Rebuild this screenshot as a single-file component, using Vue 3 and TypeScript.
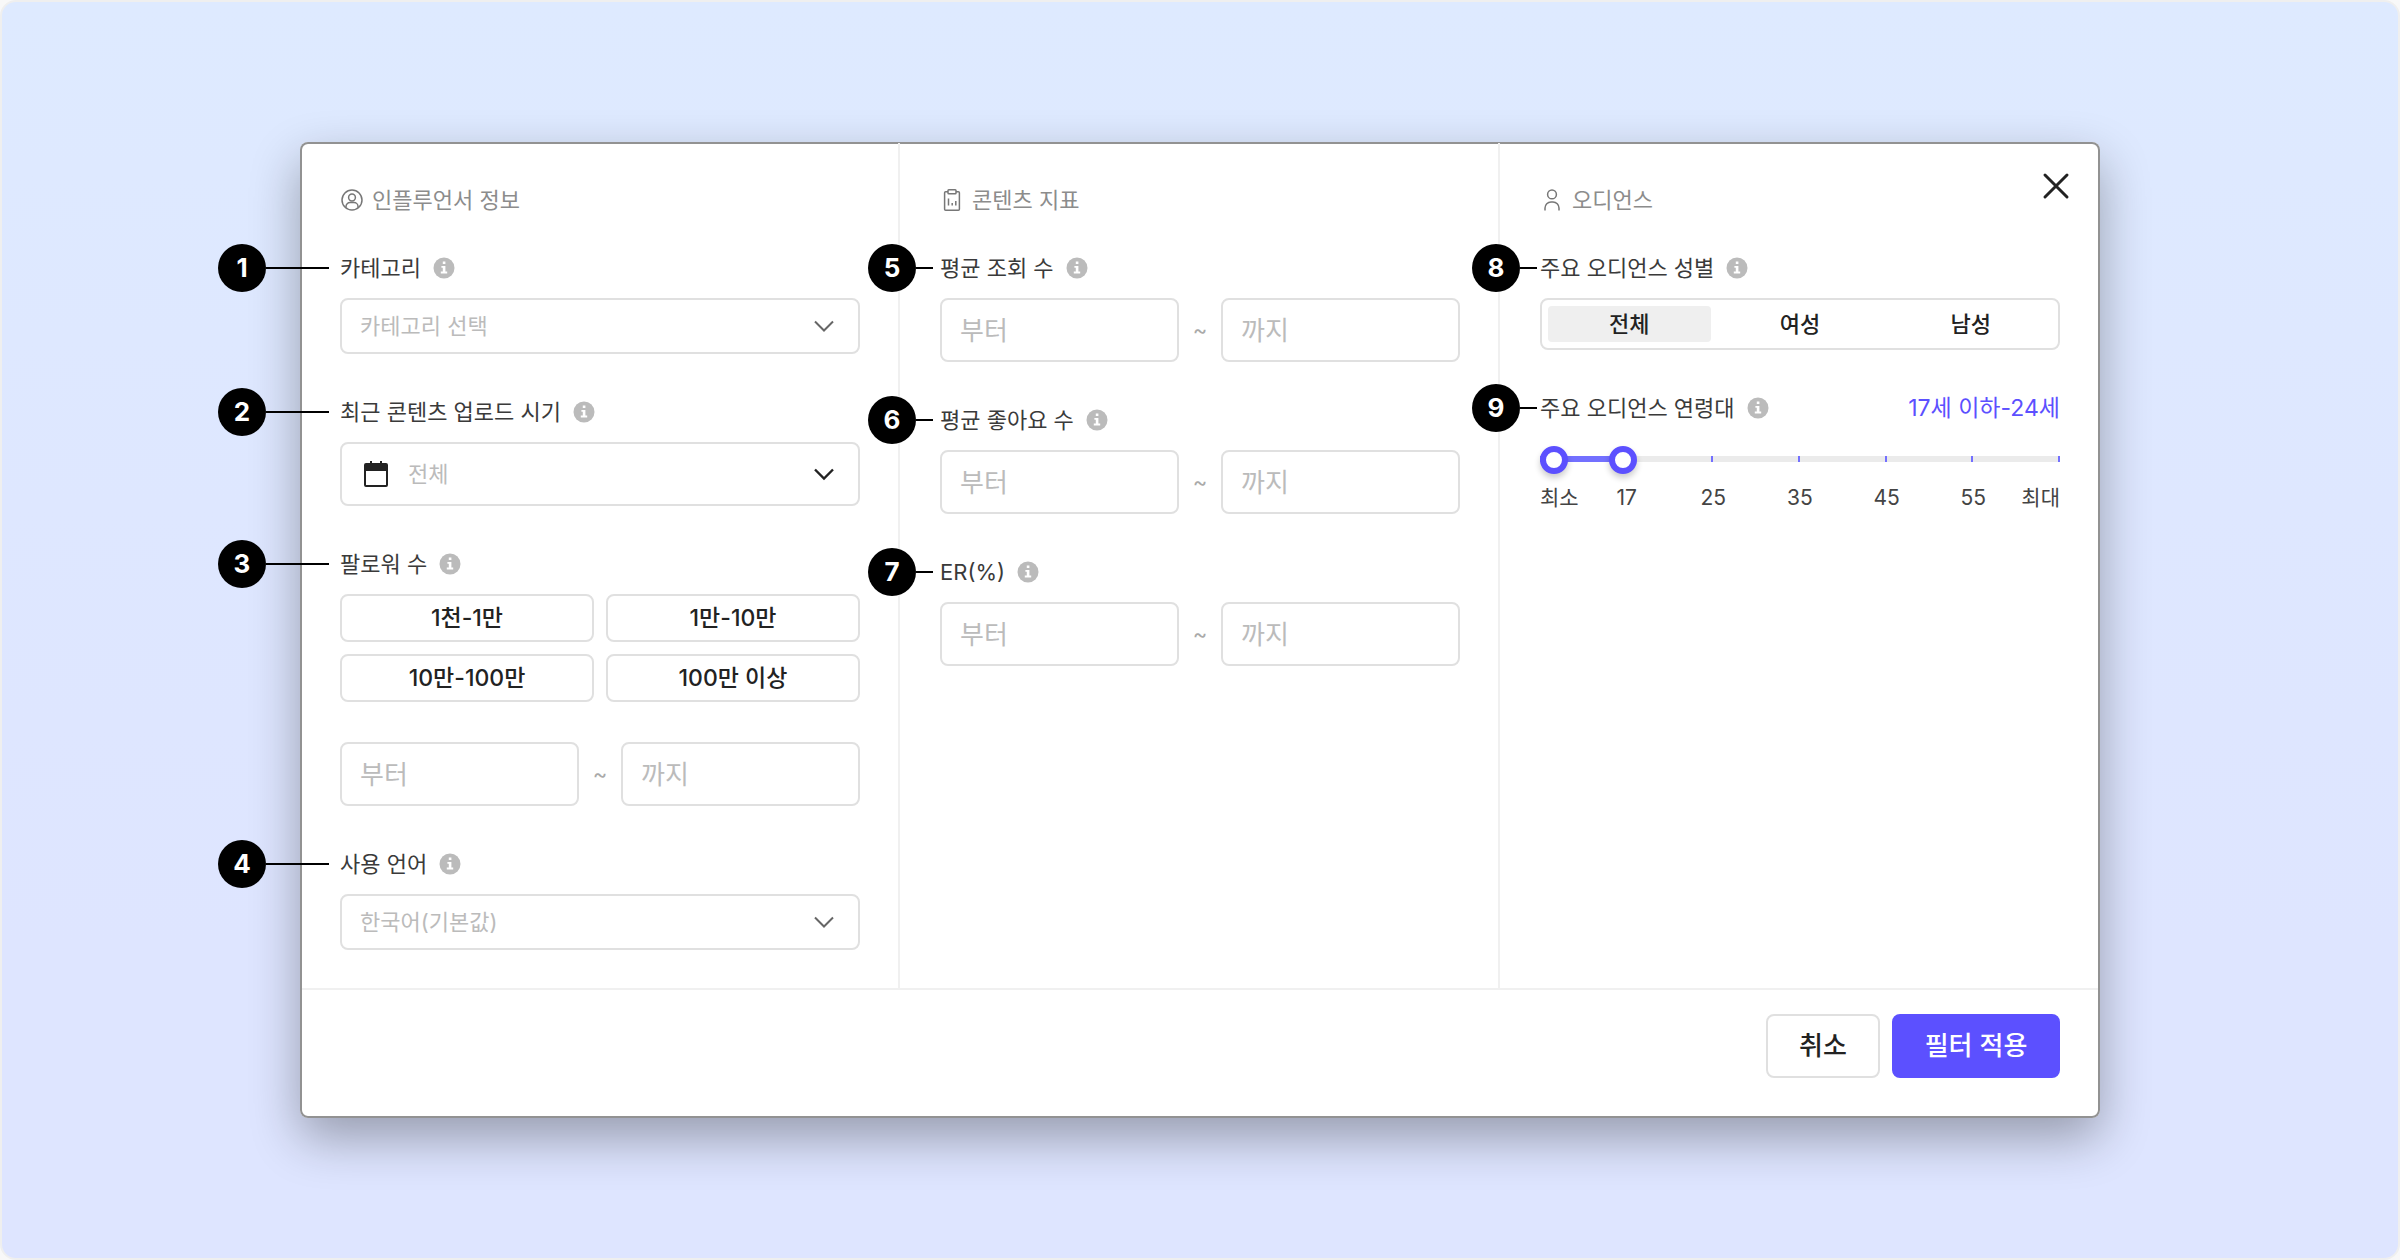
<script setup lang="ts">
import { ref } from 'vue'

interface RangeField {
  id: string
  step: number
  label: string
}

const followerPresets: string[] = ['1천-1만', '1만-10만', '10만-100만', '100만 이상']

const metricFields: RangeField[] = [
  { id: 'views', step: 5, label: '평균 조회 수' },
  { id: 'likes', step: 6, label: '평균 좋아요 수' },
  { id: 'er', step: 7, label: 'ER(%)' },
]

const genders: string[] = ['전체', '여성', '남성']
const gender = ref('전체')

const ageLabels: string[] = ['17', '25', '35', '45', '55']
const ageTicks: number[] = [2, 3, 4, 5, 6]
const ageMin = ref(0)
const ageMax = ref(14)
</script>

<template>
  <main class="stage">
    <form class="dialog" @submit.prevent>
      <button type="button" class="close" aria-label="닫기">
        <svg viewBox="0 0 28 28" width="28" height="28"><path d="M3 3L25 25M25 3L3 25" /></svg>
      </button>

      <div class="columns">
        <section class="column">
          <h2>
            <svg class="line-icon" viewBox="0 0 24 24">
              <circle cx="12" cy="12" r="10" />
              <circle cx="12" cy="9.5" r="3.4" />
              <path d="M6 19.5v-1a4 4 0 0 1 4-4h4a4 4 0 0 1 4 4v1" />
            </svg>
            인플루언서 정보
          </h2>

          <div class="field">
            <div class="label-row">
              <span class="step wide"><b>1</b></span>
              <label for="category">카테고리</label>
              <svg class="info" viewBox="0 0 22 22"><circle cx="11" cy="11" r="10.5" /><path d="M9.8 4.6h2.6v2.5H9.8zM8.4 9h4v5.6h1.8v1.8H7.8v-1.8h2V10.7H8.4z" /></svg>
            </div>
            <div class="select">
              <select id="category"><option>카테고리 선택</option></select>
              <svg class="chevron" viewBox="0 0 24 24"><path d="M3 7.5l9 9 9-9" /></svg>
            </div>
          </div>

          <div class="field">
            <div class="label-row">
              <span class="step wide"><b>2</b></span>
              <label for="uploaded">최근 콘텐츠 업로드 시기</label>
              <svg class="info" viewBox="0 0 22 22"><circle cx="11" cy="11" r="10.5" /><path d="M9.8 4.6h2.6v2.5H9.8zM8.4 9h4v5.6h1.8v1.8H7.8v-1.8h2V10.7H8.4z" /></svg>
            </div>
            <div class="select tall">
              <select id="uploaded"><option>전체</option></select>
              <svg class="calendar" viewBox="0 0 24 26">
                <path class="solid" d="M0 4a2 2 0 0 1 2-2h4V0h2v2h8V0h2v2h4a2 2 0 0 1 2 2v6H0z" />
                <path class="frame" d="M1 9v15a1 1 0 0 0 1 1h20a1 1 0 0 0 1-1V9" />
              </svg>
              <svg class="chevron dark" viewBox="0 0 24 24"><path d="M3 7.5l9 9 9-9" /></svg>
            </div>
          </div>

          <div class="field">
            <div class="label-row">
              <span class="step wide"><b>3</b></span>
              <label for="followers-from">팔로워 수</label>
              <svg class="info" viewBox="0 0 22 22"><circle cx="11" cy="11" r="10.5" /><path d="M9.8 4.6h2.6v2.5H9.8zM8.4 9h4v5.6h1.8v1.8H7.8v-1.8h2V10.7H8.4z" /></svg>
            </div>
            <div class="presets">
              <button v-for="preset in followerPresets" :key="preset" type="button">{{ preset }}</button>
            </div>
            <div class="range">
              <input id="followers-from" type="text" placeholder="부터" />
              <span class="tilde">~</span>
              <input type="text" placeholder="까지" aria-label="팔로워 수 까지" />
            </div>
          </div>

          <div class="field">
            <div class="label-row">
              <span class="step wide"><b>4</b></span>
              <label for="language">사용 언어</label>
              <svg class="info" viewBox="0 0 22 22"><circle cx="11" cy="11" r="10.5" /><path d="M9.8 4.6h2.6v2.5H9.8zM8.4 9h4v5.6h1.8v1.8H7.8v-1.8h2V10.7H8.4z" /></svg>
            </div>
            <div class="select">
              <select id="language"><option>한국어(기본값)</option></select>
              <svg class="chevron" viewBox="0 0 24 24"><path d="M3 7.5l9 9 9-9" /></svg>
            </div>
          </div>
        </section>

        <section class="column">
          <h2>
            <svg class="line-icon" viewBox="0 0 24 24">
              <path d="M8 3.8H5.6a1 1 0 0 0-1 1v16.4a1 1 0 0 0 1 1h12.8a1 1 0 0 0 1-1V4.8a1 1 0 0 0-1-1H16" />
              <rect x="8" y="1.8" width="8" height="4" rx="0.8" />
              <path d="M8.5 10.5v7M12.2 15v2.5M15.8 13v4.5" />
            </svg>
            콘텐츠 지표
          </h2>

          <div v-for="field in metricFields" :key="field.id" class="field">
            <div class="label-row">
              <span class="step"><b>{{ field.step }}</b></span>
              <label :for="field.id">{{ field.label }}</label>
              <svg class="info" viewBox="0 0 22 22"><circle cx="11" cy="11" r="10.5" /><path d="M9.8 4.6h2.6v2.5H9.8zM8.4 9h4v5.6h1.8v1.8H7.8v-1.8h2V10.7H8.4z" /></svg>
            </div>
            <div class="range">
              <input :id="field.id" type="text" placeholder="부터" />
              <span class="tilde">~</span>
              <input type="text" placeholder="까지" :aria-label="field.label + ' 까지'" />
            </div>
          </div>
        </section>

        <section class="column">
          <h2>
            <svg class="line-icon" viewBox="0 0 24 24">
              <circle cx="12" cy="6.4" r="4.4" />
              <path d="M5 22.5V20a6 6 0 0 1 6-6h2a6 6 0 0 1 6 6v2.5" />
            </svg>
            오디언스
          </h2>

          <div class="field">
            <div class="label-row">
              <span class="step near"><b>8</b></span>
              <span id="gender-label">주요 오디언스 성별</span>
              <svg class="info" viewBox="0 0 22 22"><circle cx="11" cy="11" r="10.5" /><path d="M9.8 4.6h2.6v2.5H9.8zM8.4 9h4v5.6h1.8v1.8H7.8v-1.8h2V10.7H8.4z" /></svg>
            </div>
            <div class="segments" role="group" aria-labelledby="gender-label">
              <button
                v-for="option in genders"
                :key="option"
                type="button"
                :class="{ active: option === gender }"
                :aria-pressed="option === gender"
                @click="gender = option"
              >{{ option }}</button>
            </div>
          </div>

          <div class="field">
            <div class="label-row">
              <span class="step near"><b>9</b></span>
              <label for="age-min">주요 오디언스 연령대</label>
              <svg class="info" viewBox="0 0 22 22"><circle cx="11" cy="11" r="10.5" /><path d="M9.8 4.6h2.6v2.5H9.8zM8.4 9h4v5.6h1.8v1.8H7.8v-1.8h2V10.7H8.4z" /></svg>
              <output class="age-value" for="age-min age-max">17세 이하-24세</output>
            </div>
            <div class="slider">
              <div class="track">
                <div class="fill" :style="{ left: ageMin + '%', width: ageMax - ageMin + '%' }"></div>
                <i v-for="tick in ageTicks" :key="tick" :style="{ left: (tick / 6) * 100 + '%' }"></i>
              </div>
              <input id="age-min" v-model.number="ageMin" type="range" min="0" max="100" />
              <input id="age-max" v-model.number="ageMax" type="range" min="0" max="100" aria-label="최대 연령" />
            </div>
            <div class="age-labels">
              <span class="first">최소</span>
              <span v-for="age in ageLabels" :key="age">{{ age }}</span>
              <span class="last">최대</span>
            </div>
          </div>
        </section>
      </div>

      <footer>
        <button type="button" class="cancel">취소</button>
        <button type="submit" class="apply">필터 적용</button>
      </footer>
    </form>
  </main>
</template>

<style>
body {
  background: #f8f8f8;
}
</style>

<style scoped>
* {
  box-sizing: border-box;
}
.stage {
  display: flex;
  align-items: center;
  justify-content: center;
  min-height: 100vh;
  border: 2px solid #efefef;
  border-radius: 16px;
  background: linear-gradient(#deeaff, #dee7ff 40%, #dee5ff 75%, #dee5ff);
  color: #444;
  font: 22px/36px Inter, "Noto Sans CJK KR", sans-serif;
}
.dialog {
  position: relative;
  width: 75vw;
  border-radius: 8px;
  background: #fff;
  box-shadow: inset 0 0 0 2px #929292, 0 20px 50px rgba(0, 0, 0, 0.32);
}
button,
input,
select {
  margin: 0;
  font: inherit;
}
button {
  padding: 0;
  border: 2px solid #e0e0e0;
  border-radius: 8px;
  background: #fff;
  color: #222;
  font-weight: 500;
}
.close {
  position: absolute;
  top: 30px;
  right: 30px;
  display: flex;
  border: 0;
  background: none;
}
.close path {
  fill: none;
  stroke: #222;
  stroke-width: 3;
  stroke-linecap: round;
}
.columns {
  display: grid;
  grid-template-columns: repeat(3, minmax(0, 1fr));
}
.column {
  display: flex;
  flex-direction: column;
  gap: 40px;
  padding: 40px 40px 38px;
}
.column:not(:last-child) {
  padding-right: 38px;
  border-right: 2px solid #f0f0f0;
  border-image: linear-gradient(#929292 2px, #f0f0f0 2px) 1;
}
h2 {
  display: flex;
  align-items: center;
  gap: 8px;
  margin: 0 0 -8px;
  color: #8c8c8c;
  font-size: 22px;
  font-weight: 400;
}
.line-icon {
  width: 24px;
  height: 24px;
  fill: none;
  stroke: #777;
  stroke-width: 1.5;
}
.label-row {
  position: relative;
  display: flex;
  align-items: center;
  gap: 12px;
  margin-bottom: 12px;
  color: #3a3a3a;
}
.info {
  width: 22px;
  height: 22px;
  fill: #bbb;
}
.info path {
  fill: #fff;
}
.step {
  position: absolute;
  left: -72px;
  display: flex;
  align-items: center;
}
.step::after {
  width: 17px;
  height: 2px;
  background: #000;
  content: "";
}
.step.wide {
  left: -122px;
}
.step.wide::after {
  width: 63px;
}
.step.near {
  left: -68px;
}
.step b {
  width: 48px;
  border-radius: 50%;
  background: #000;
  color: #fff;
  font-size: 26px;
  font-weight: 700;
  line-height: 48px;
  text-align: center;
}
.select {
  position: relative;
  display: flex;
  align-items: center;
  height: 56px;
}
.select.tall {
  height: 64px;
}
select {
  width: 100%;
  height: 100%;
  padding: 0 60px 0 18px;
  border: 2px solid #e0e0e0;
  border-radius: 8px;
  background: #fff;
  color: #bbb;
  appearance: none;
}
.tall select {
  padding-left: 66px;
}
.chevron {
  position: absolute;
  right: 24px;
  width: 24px;
  height: 24px;
  fill: none;
  stroke: #666;
  stroke-width: 2;
  pointer-events: none;
}
.chevron.dark {
  stroke: #222;
  stroke-width: 2.4;
}
.calendar {
  position: absolute;
  left: 24px;
  width: 24px;
  height: 26px;
  pointer-events: none;
}
.calendar .solid {
  fill: #222;
}
.calendar .frame {
  fill: none;
  stroke: #222;
  stroke-width: 2;
}
.presets {
  display: grid;
  grid-template-columns: 1fr 1fr;
  gap: 12px;
  margin-bottom: 40px;
}
.presets button {
  height: 48px;
  font-size: 23px;
}
.range {
  display: flex;
  align-items: center;
}
.range input {
  flex: 1;
  width: 0;
  height: 64px;
  padding: 0 18px;
  border: 2px solid #e0e0e0;
  border-radius: 8px;
  background: #fff;
  color: #222;
  font-size: 26px;
}
.range input::placeholder {
  color: #bbb;
  opacity: 1;
}
.tilde {
  width: 42px;
  color: #aaa;
  text-align: center;
}
.segments {
  display: grid;
  grid-template-columns: repeat(3, 1fr);
  gap: 8px;
  padding: 6px;
  border: 2px solid #e0e0e0;
  border-radius: 8px;
}
.segments button {
  height: 36px;
  border: 0;
  border-radius: 4px;
}
.segments .active {
  background: #efefef;
}
.age-value {
  margin-left: auto;
  color: #5c50ff;
  font-size: 23px;
}
.slider {
  position: relative;
  height: 28px;
  margin: 20px 0 6px;
}
.track {
  position: absolute;
  top: 10px;
  right: 0;
  left: 0;
  height: 6px;
  background: #ebebeb;
}
.fill {
  position: absolute;
  height: 6px;
  background: #7370ff;
}
.track i {
  position: absolute;
  width: 2px;
  height: 6px;
  margin-left: -2px;
  background: #7370ff;
}
.slider input {
  position: absolute;
  inset: 0;
  width: 100%;
  height: 28px;
  background: none;
  appearance: none;
  pointer-events: none;
}
.slider input::-webkit-slider-thumb {
  width: 28px;
  height: 28px;
  border: 6px solid #5c50ff;
  border-radius: 50%;
  background: #fff;
  box-shadow: 0 4px 6px rgba(0, 0, 0, 0.2);
  box-sizing: border-box;
  appearance: none;
  pointer-events: auto;
}
.age-labels {
  display: grid;
  grid-template-columns: minmax(0, 1fr) repeat(5, minmax(0, 2fr)) minmax(0, 1fr);
  font-size: 21px;
  text-align: center;
}
.age-labels span {
  white-space: nowrap;
}
.age-labels .first {
  text-align: left;
}
.age-labels .last {
  text-align: right;
}
footer {
  display: flex;
  justify-content: flex-end;
  gap: 12px;
  margin: 0 2px;
  padding: 24px 38px 40px;
  border-top: 2px solid #f0f0f0;
}
footer button {
  min-width: 114px;
  height: 64px;
  padding: 0 30px;
  font-size: 26px;
}
footer .apply {
  min-width: 168px;
  border-color: #5c50ff;
  background: #5c50ff;
  color: #fff;
}
</style>
